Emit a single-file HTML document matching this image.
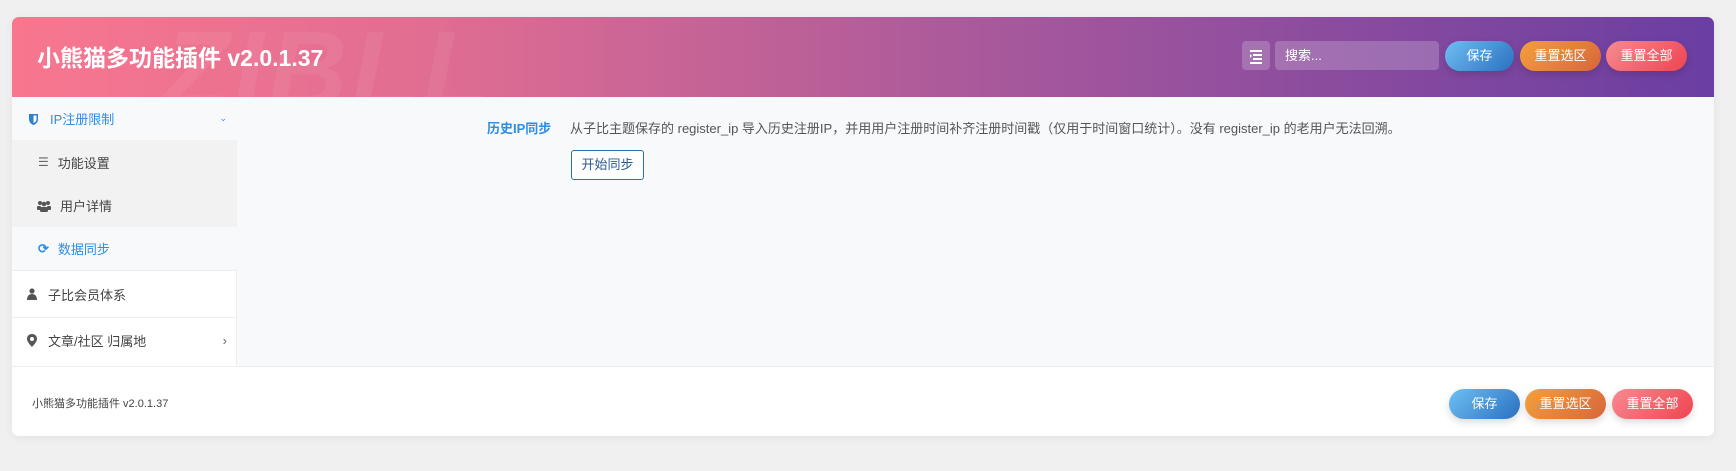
<!DOCTYPE html>
<html><head><meta charset="utf-8"><style>
*{box-sizing:border-box;margin:0;padding:0}
body{width:1736px;height:471px;background:#f0f0f0;font-family:"Liberation Sans","Noto Sans CJK SC",sans-serif;position:relative;overflow:hidden}
.card{position:absolute;left:12px;top:17px;width:1702px;height:419px;background:#fff;border-radius:7px;overflow:hidden;box-shadow:0 2px 10px rgba(0,0,0,.06)}
.hd{position:absolute;left:0;top:0;width:100%;height:80px;background:linear-gradient(90deg,#f8778f 0%,#e06d92 25%,#a4579c 60%,#6a3ea2 100%);overflow:hidden}
.hd .wm{position:absolute;left:150px;top:-10px;font-size:110px;font-weight:bold;font-style:italic;color:rgba(255,255,255,.06);letter-spacing:4px}
.hd h1{position:absolute;left:25px;top:22px;color:#fff;font-size:23px;font-weight:bold}
.ib{position:absolute;top:24px;height:29px;border-radius:4px;background:rgba(255,255,255,.2)}
.btn{position:absolute;height:30px;border-radius:15px;color:#fff;font-size:13px;text-align:center;line-height:30px;box-shadow:0 3px 8px rgba(0,0,0,.15)}
.b1{background:linear-gradient(135deg,#6fbff3,#2a70c0)}
.b2{background:linear-gradient(135deg,#f3a03c,#d7663b)}
.b3{background:linear-gradient(135deg,#f78a92,#ef4450)}
.side{position:absolute;left:0;top:80px;width:225px;height:269px;background:#fff;border-right:1px solid #eee}
.it{position:absolute;left:0;width:225px;font-size:13px;color:#444;display:flex;align-items:center}
.main{position:absolute;left:225px;top:80px;width:1477px;height:269px;background:#f8f9fb}
.ft{position:absolute;left:0;top:349px;width:100%;height:70px;border-top:1px solid #eee;background:#fff}
</style></head><body>
<div class="card">
 <div class="hd"><div class="wm">ZIBLL</div><h1>小熊猫多功能插件 v2.0.1.37</h1>
  <div class="ib" style="left:1230px;width:28px"><svg width="28" height="29" viewBox="0 0 28 29"><g fill="#fff"><rect x="8" y="9" width="12" height="2"/><rect x="11" y="13" width="9" height="2"/><rect x="11" y="17" width="9" height="2"/><rect x="8" y="21" width="12" height="2" /><path d="M8 13l2 2-2 2z"/></g></svg></div>
  <div class="ib" style="left:1263px;width:164px;color:#fff;font-size:13px;line-height:29px;padding-left:10px">搜索...</div>
  <div class="btn b1" style="left:1433px;top:24px;width:69px">保存</div>
  <div class="btn b2" style="left:1508px;top:24px;width:81px">重置选区</div>
  <div class="btn b3" style="left:1594px;top:24px;width:81px">重置全部</div>
 </div>
 <div class="side">
  <div class="it" style="top:0;height:43px;background:#f8f9fb;color:#2d8ee8;padding-left:16px"><svg width="11" height="12" viewBox="0 0 11 12"><path d="M1 1h9v5c0 3-2 5-4.5 6C3 11 1 9 1 6z" fill="#2d7fd0"/><path d="M5.5 2.5h3v3.5c0 2-1.3 3.3-3 4z" fill="#fff"/></svg><span style="margin-left:11px">IP注册限制</span><span style="position:absolute;right:10px;font-size:9px;color:#2d8ee8">⌄</span></div>
  <div class="it" style="top:43px;height:44px;background:#f2f2f2;padding-left:26px"><span style="font-size:12px;color:#666">☰</span><span style="margin-left:9px">功能设置</span></div>
  <div class="it" style="top:87px;height:43px;background:#f2f2f2;padding-left:25px"><svg width="14" height="12" viewBox="0 0 14 12" fill="#555"><circle cx="3" cy="3" r="2"/><circle cx="11" cy="3" r="2"/><circle cx="7" cy="4" r="2.3"/><rect x="3" y="7" width="8" height="5" rx="1.5"/><rect x="0" y="6" width="4" height="4" rx="1"/><rect x="10" y="6" width="4" height="4" rx="1"/></svg><span style="margin-left:9px">用户详情</span></div>
  <div class="it" style="top:130px;height:43px;background:#f8f9fb;color:#2d8ee8;padding-left:26px"><span style="font-weight:bold;font-size:13px">⟳</span><span style="margin-left:9px">数据同步</span></div>
  <div class="it" style="top:173px;height:47px;border-top:1px solid #eee;padding-left:15px"><svg width="10" height="12" viewBox="0 0 10 12" fill="#555"><circle cx="5" cy="3" r="2.6"/><path d="M0 12c0-4 2-6 5-6s5 2 5 6z"/></svg><span style="margin-left:11px">子比会员体系</span></div>
  <div class="it" style="top:220px;height:46px;border-top:1px solid #eee;padding-left:15px"><svg width="10" height="13" viewBox="0 0 10 13" fill="#555"><path d="M5 0C2 0 0 2 0 5c0 3 5 8 5 8s5-5 5-8c0-3-2-5-5-5zm0 7a2 2 0 110-4 2 2 0 010 4z"/></svg><span style="margin-left:11px">文章/社区 归属地</span><span style="position:absolute;right:10px;color:#666">›</span></div>
 </div>
 <div class="main">
  <div style="position:absolute;left:250px;top:21px;font-size:13px;font-weight:bold;color:#2d8ee8">历史IP同步</div>
  <div style="position:absolute;left:333px;top:21px;font-size:13px;color:#555">从子比主题保存的 register_ip 导入历史注册IP，并用用户注册时间补齐注册时间戳（仅用于时间窗口统计）。没有 register_ip 的老用户无法回溯。</div>
  <div style="position:absolute;left:334px;top:53px;width:73px;height:30px;border:1px solid #2a6fb5;border-radius:3px;background:#fff;font-size:13px;color:#2a5a90;text-align:center;line-height:28px">开始同步</div>
 </div>
 <div class="ft">
  <div style="position:absolute;left:20px;top:28px;font-size:11px;color:#444">小熊猫多功能插件 v2.0.1.37</div>
  <div class="btn b1" style="left:1437px;top:22px;width:71px">保存</div>
  <div class="btn b2" style="left:1513px;top:22px;width:81px">重置选区</div>
  <div class="btn b3" style="left:1600px;top:22px;width:81px">重置全部</div>
 </div>
</div>
</body></html>
